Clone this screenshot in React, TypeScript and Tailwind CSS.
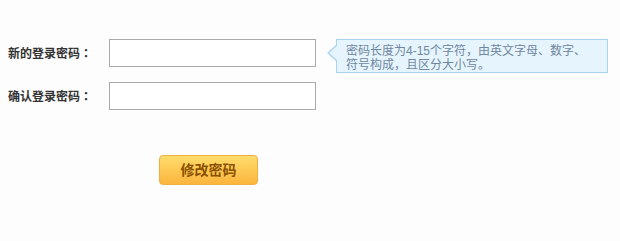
import { useState } from "react";

const font = { fontFamily: '"Liberation Sans", "Noto Sans CJK SC", sans-serif' };
const colonFont = { fontFamily: '"Noto Sans CJK TC", sans-serif' };

export default function App() {
	const [pwd, setPwd] = useState("");
	const [confirmPwd, setConfirmPwd] = useState("");

	return (
		<div className="min-h-[241px] w-[620px] bg-[#fdfdfd] pt-[39px]" style={font}>
			{/* new password */}
			<div className="flex h-[28px] items-center">
				<label className="w-[109px] pl-[8px] text-[12px] font-bold leading-[28px] text-[#333]">
					新的登录密码<span style={colonFont}>：</span>
				</label>
				<input
					type="password"
					autoFocus
					value={pwd}
					onChange={(e) => setPwd(e.target.value)}
					className="h-[28px] w-[207px] border border-[#a9a9a9] bg-white px-[3px] text-[12px] outline-none"
				/>
				<div className="relative ml-[20px] self-start">
					<div className="w-[272px] border border-[#a9d4f0] bg-[#e6f4fd] pb-0 pl-[9px] pr-[16px] pt-[4px] text-[12px] leading-[14px] text-[#6f87a0]">
						密码长度为4-15个字符，由英文字母、数字、符号构成，且区分大小写。
					</div>
					<span className="absolute left-[-9px] top-[6px] h-0 w-0 border-y-[8px] border-r-[9px] border-y-transparent border-r-[#a9d4f0]" />
					<span className="absolute left-[-7px] top-[7px] h-0 w-0 border-y-[7px] border-r-[8px] border-y-transparent border-r-[#e6f4fd]" />
				</div>
			</div>

			{/* confirm password */}
			<div className="mt-[15px] flex h-[28px] items-center">
				<label className="w-[109px] pl-[8px] text-[12px] font-bold leading-[28px] text-[#333]">
					确认登录密码<span style={colonFont}>：</span>
				</label>
				<input
					type="password"
					value={confirmPwd}
					onChange={(e) => setConfirmPwd(e.target.value)}
					className="h-[28px] w-[207px] border border-[#a9a9a9] bg-white px-[3px] text-[12px] outline-none"
				/>
			</div>

			<div className="ml-[159px] mt-[45px]">
				<button className="h-[30px] w-[99px] rounded-[4px] border border-[#efb042] bg-gradient-to-b from-[#ffdc6a] to-[#fbb53c] text-[14px] font-bold text-[#8a5100]">
					修改密码
				</button>
			</div>
		</div>
	);
}
